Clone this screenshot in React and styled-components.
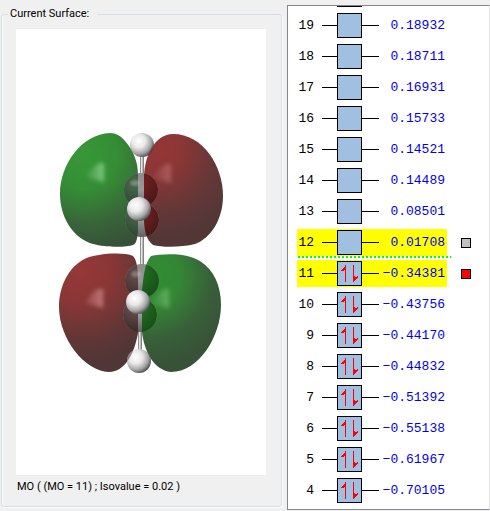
import React from "react";
import styled, { createGlobalStyle } from "styled-components";

const GlobalStyle = createGlobalStyle`
	* {
		box-sizing: border-box;
	}
	body {
		margin: 0;
		background-color: #f0f0f0;
		color: #000;
		font-family: Roboto, "Liberation Sans", sans-serif;
		font-size: 11px;
	}
`;

const Page = styled.main`
	display: grid;
	grid-template-columns: minmax(0, 287fr) minmax(0, 203fr);
	align-items: start;
`;

const SurfaceGroup = styled.fieldset`
	min-width: 0;
	margin: 7px 5px 0 1px;
	padding: 8px 15px 12px 14px;
	border: 1px solid #d5dfe5;
	border-radius: 3px;
	box-shadow: inset 1px 0 #fff, 1px 1px #fff;
`;

const Title = styled.legend`
	margin-left: -8px;
	padding: 0 9px 0 2px;
	line-height: 14px;
`;

const Viewer = styled.svg`
	display: block;
	width: 100%;
	height: auto;
	background-color: #fff;
`;

const Caption = styled.p`
	margin: 5px 0 0 1px;
	line-height: 14px;
`;

const LevelPanel = styled.section`
	margin-top: 5px;
	padding: 0 0 3px 9px;
	background-color: #fff;
	border: 1px solid #828790;
	border-right-color: #e3e3e3;
`;

const LevelList = styled.ol`
	margin: 0;
	padding: 0;
	list-style: none;
`;

const BoxEdge = styled.div`
	width: 25px;
	height: 1px;
	margin: 0 0 3px 40px;
	background-color: #000;
`;

const Row = styled.li`
	display: flex;
	flex-wrap: wrap;
	align-items: center;
	column-gap: 14px;
	padding-top: 2px;
`;

const Level = styled.div`
	display: flex;
	align-items: center;
	width: 150px;
	height: 27px;
	padding-right: 2px;
	background-color: ${(props) => (props.$active ? "#ffff00" : "transparent")};
	font-family: "Liberation Mono", monospace;
	font-size: 13px;
	line-height: 16px;
`;

const Index = styled.span`
	width: 17px;
	margin-right: 8px;
	text-align: right;
`;

const Line = styled.span`
	width: ${(props) => props.$width}px;
	height: 1px;
	background-color: #000;
`;

const Box = styled.span`
	display: block;
	width: 25px;
	height: 25px;
	border: 1px solid #000;
	background-color: #a1bfe0;
`;

const Arrows = styled.svg`
	display: block;
	width: 23px;
	height: 23px;
`;

const Energy = styled.span`
	flex: 1;
	display: flex;
	justify-content: flex-end;
	color: #0000ee;
	white-space: nowrap;
`;

const Swatch = styled.button`
	width: 10px;
	height: 10px;
	padding: 0;
	border: 1px solid #000;
	background-color: ${(props) => props.$color};
`;

const Divider = styled.div`
	width: 153px;
	height: 2px;
	margin-left: 1px;
	background: ${(props) =>
		props.$visible ? "repeating-linear-gradient(90deg, #00ff00 0 2px, transparent 2px 4px)" : "none"};
`;

const levels = [
	{ n: 19, energy: "0.18932" },
	{ n: 18, energy: "0.18711" },
	{ n: 17, energy: "0.16931" },
	{ n: 16, energy: "0.15733" },
	{ n: 15, energy: "0.14521" },
	{ n: 14, energy: "0.14489" },
	{ n: 13, energy: "0.08501" },
	{ n: 12, energy: "0.01708", swatch: "#c0c0c0", lumo: true },
	{ n: 11, energy: "−0.34381", swatch: "#ff0000", filled: true },
	{ n: 10, energy: "−0.43756", filled: true },
	{ n: 9, energy: "−0.44170", filled: true },
	{ n: 8, energy: "−0.44832", filled: true },
	{ n: 7, energy: "−0.51392", filled: true },
	{ n: 6, energy: "−0.55138", filled: true },
	{ n: 5, energy: "−0.61967", filled: true },
	{ n: 4, energy: "−0.70105", filled: true },
];

const lobes = {
	topLeft:
		"M110 133C116 133 121 136 125 141C133 150 138 161 138 175V226C138 235 137 244 133 245C125 248 104 247 93 244C72 238 60 216 60 194C60 164 82 134 110 133Z",
	topRight:
		"M173 134C203 134 223 166 223 196C223 219 211 238 195 244C183 247 164 248 153 245C146 240 144 229 144 219V178C144 156 155 134 173 134Z",
	bottomLeft:
		"M133 256C137 260 138 270 138 280V333C135 351 126 372 109 372C84 371 59 338 59 307C59 281 74 257 99 255C111 253 126 253 133 256Z",
	bottomRight:
		"M151 256C164 253 188 253 200 261C214 270 221 286 221 305C221 336 199 372 171 372C153 370 144 350 142 332V292C143 278 145 262 151 256Z",
};

function Carbon({ x, y, left, right, pair }) {
	return (
		<g>
			<circle cx={x} cy={y} r="17" fill="url(#carbon)" />
			<circle cx={x} cy={y} r="17" fill={`url(#${left})`} clipPath={`url(#${pair}Left)`} />
			<circle cx={x} cy={y} r="17" fill={`url(#${right})`} clipPath={`url(#${pair}Right)`} />
			<ellipse cx={x - 6} cy={y - 7} rx="5" ry="3" fill="#fff" opacity="0.22" filter="url(#soften)" />
		</g>
	);
}

function Hydrogen({ x, y }) {
	return <circle cx={x} cy={y} r="12" fill="url(#hydrogen)" />;
}

function Shine({ x, y, color }) {
	return (
		<path
			d={`M${x + 2} ${y - 9}L${x + 7} ${y - 9}V${y + 10}L${x - 11} ${y + 5}Q${x - 6} ${y - 4} ${x + 2} ${y - 9}Z`}
			fill={`url(#${color})`}
			filter="url(#blurShine)"
		/>
	);
}

function Orbital() {
	return (
		<Viewer viewBox="16 29 250 446" role="img" aria-label="Molecular orbital surface">
			<defs>
				<radialGradient id="greenLeft" gradientUnits="userSpaceOnUse" cx="84" cy="156" r="96">
					<stop offset="0" stopColor="#379837" />
					<stop offset="0.35" stopColor="#358d35" />
					<stop offset="0.7" stopColor="#386539" />
					<stop offset="1" stopColor="#385038" />
				</radialGradient>
				<radialGradient id="redRight" gradientUnits="userSpaceOnUse" cx="156" cy="150" r="88">
					<stop offset="0" stopColor="#963636" />
					<stop offset="0.3" stopColor="#8b3636" />
					<stop offset="0.7" stopColor="#643737" />
					<stop offset="1" stopColor="#533737" />
				</radialGradient>
				<radialGradient id="redLeft" gradientUnits="userSpaceOnUse" cx="80" cy="272" r="92">
					<stop offset="0" stopColor="#963838" />
					<stop offset="0.35" stopColor="#893636" />
					<stop offset="0.75" stopColor="#603636" />
					<stop offset="1" stopColor="#503636" />
				</radialGradient>
				<radialGradient id="greenRight" gradientUnits="userSpaceOnUse" cx="150" cy="278" r="86">
					<stop offset="0" stopColor="#2f8f30" />
					<stop offset="0.35" stopColor="#348635" />
					<stop offset="0.7" stopColor="#386039" />
					<stop offset="1" stopColor="#385238" />
				</radialGradient>
				<radialGradient id="hydrogen" cx="0.36" cy="0.34" r="0.7">
					<stop offset="0" stopColor="#fff" />
					<stop offset="0.4" stopColor="#e8e8e8" />
					<stop offset="0.75" stopColor="#a5a5a5" />
					<stop offset="1" stopColor="#4f4f4f" />
				</radialGradient>
				<linearGradient id="carbon" x2="0" y2="1">
					<stop offset="0" stopColor="#8c8c8c" />
					<stop offset="0.5" stopColor="#999" />
					<stop offset="1" stopColor="#606060" />
				</linearGradient>
				<radialGradient id="tintGreen" cx="0.35" cy="0.3" r="0.7">
					<stop offset="0" stopColor="#4e6d50" />
					<stop offset="1" stopColor="#2b4430" />
				</radialGradient>
				<radialGradient id="tintRed" cx="0.4" cy="0.3" r="0.7">
					<stop offset="0" stopColor="#7d2222" />
					<stop offset="1" stopColor="#4b1818" />
				</radialGradient>
				<radialGradient id="tintBrown" cx="0.35" cy="0.3" r="0.7">
					<stop offset="0" stopColor="#6b5252" />
					<stop offset="1" stopColor="#3d2929" />
				</radialGradient>
				<radialGradient id="tintLeaf" cx="0.4" cy="0.3" r="0.7">
					<stop offset="0" stopColor="#247523" />
					<stop offset="1" stopColor="#175019" />
				</radialGradient>
				<linearGradient id="shineGreen" x1="0" x2="1">
					<stop offset="0" stopColor="#5fae5f" stopOpacity="0.3" />
					<stop offset="1" stopColor="#80c880" />
				</linearGradient>
				<linearGradient id="shineRed" x1="0" x2="1">
					<stop offset="0" stopColor="#b06464" stopOpacity="0.3" />
					<stop offset="1" stopColor="#c27878" />
				</linearGradient>
				<linearGradient id="bond">
					<stop offset="0" stopColor="#666" />
					<stop offset="0.4" stopColor="#eee" />
					<stop offset="1" stopColor="#666" />
				</linearGradient>
				<filter id="soften">
					<feGaussianBlur stdDeviation="1" />
				</filter>
				<filter id="blurShine" x="-50%" y="-50%" width="200%" height="200%">
					<feGaussianBlur stdDeviation="2" />
				</filter>
				<clipPath id="topLeft">
					<path d={lobes.topLeft} />
				</clipPath>
				<clipPath id="topRight">
					<path d={lobes.topRight} />
				</clipPath>
				<clipPath id="bottomLeft">
					<path d={lobes.bottomLeft} />
				</clipPath>
				<clipPath id="bottomRight">
					<path d={lobes.bottomRight} />
				</clipPath>
			</defs>

			<rect x="140" y="150" width="4" height="130" fill="url(#bond)" />
			<rect x="138" y="310" width="4" height="50" fill="url(#bond)" />
			<path d={lobes.topLeft} fill="url(#greenLeft)" />
			<path d={lobes.topRight} fill="url(#redRight)" />
			<path d={lobes.bottomLeft} fill="url(#redLeft)" />
			<path d={lobes.bottomRight} fill="url(#greenRight)" />
			<Shine x={97} y={172} color="shineGreen" />
			<g opacity="0.6">
				<Shine x={164} y={173} color="shineRed" />
				<Shine x={162} y={298} color="shineGreen" />
			</g>
			<Shine x={96} y={298} color="shineRed" />

			<Carbon x={142} y={220} left="tintGreen" right="tintRed" pair="top" />
			<Carbon x={141} y={190} left="tintGreen" right="tintRed" pair="top" />
			<Carbon x={142} y={281} left="tintBrown" right="tintLeaf" pair="bottom" />
			<Carbon x={140} y={315} left="tintBrown" right="tintLeaf" pair="bottom" />
			<Hydrogen x={142} y={145} />
			<Hydrogen x={139} y={209} />
			<Hydrogen x={138} y={302} />
			<Hydrogen x={139} y={361} />
			<g opacity="0.6">
				<circle cx="142" cy="145" r="12" fill="#365d38" clipPath="url(#topLeft)" />
				<circle cx="142" cy="145" r="12" fill="#772222" clipPath="url(#topRight)" />
				<circle cx="139" cy="361" r="12" fill="#4d3a3a" clipPath="url(#bottomLeft)" />
				<circle cx="139" cy="361" r="12" fill="#254a26" clipPath="url(#bottomRight)" />
			</g>
		</Viewer>
	);
}

function SpinPair() {
	return (
		<Arrows viewBox="0 0 23 23" fill="#ff0000" shapeRendering="crispEdges" aria-hidden="true">
			<path d="M7 3H8V20H7V7L5 9H3V8L7 4Z" />
			<path d="M15 3H16V14L18 15L20 14V15L16 20H15Z" />
		</Arrows>
	);
}

function OrbitalLevel({ level }) {
	return (
		<Row>
			<Level $active={Boolean(level.swatch)}>
				<Index>{level.n}</Index>
				<Line $width={15} />
				<Box>{level.filled && <SpinPair />}</Box>
				<Line $width={17} />
				<Energy>{level.energy}</Energy>
			</Level>
			{level.swatch && <Swatch type="button" $color={level.swatch} aria-label={`Surface for MO ${level.n}`} />}
			<Divider $visible={level.lumo} />
		</Row>
	);
}

export default function App() {
	return (
		<>
			<GlobalStyle />
			<Page>
				<SurfaceGroup>
					<Title>Current Surface:</Title>
					<Orbital />
					<Caption>MO ( (MO = 11) ; Isovalue = 0.02 )</Caption>
				</SurfaceGroup>
				<LevelPanel aria-label="Orbital energies">
					<BoxEdge />
					<LevelList>
						{levels.map((level) => (
							<OrbitalLevel key={level.n} level={level} />
						))}
					</LevelList>
				</LevelPanel>
			</Page>
		</>
	);
}
